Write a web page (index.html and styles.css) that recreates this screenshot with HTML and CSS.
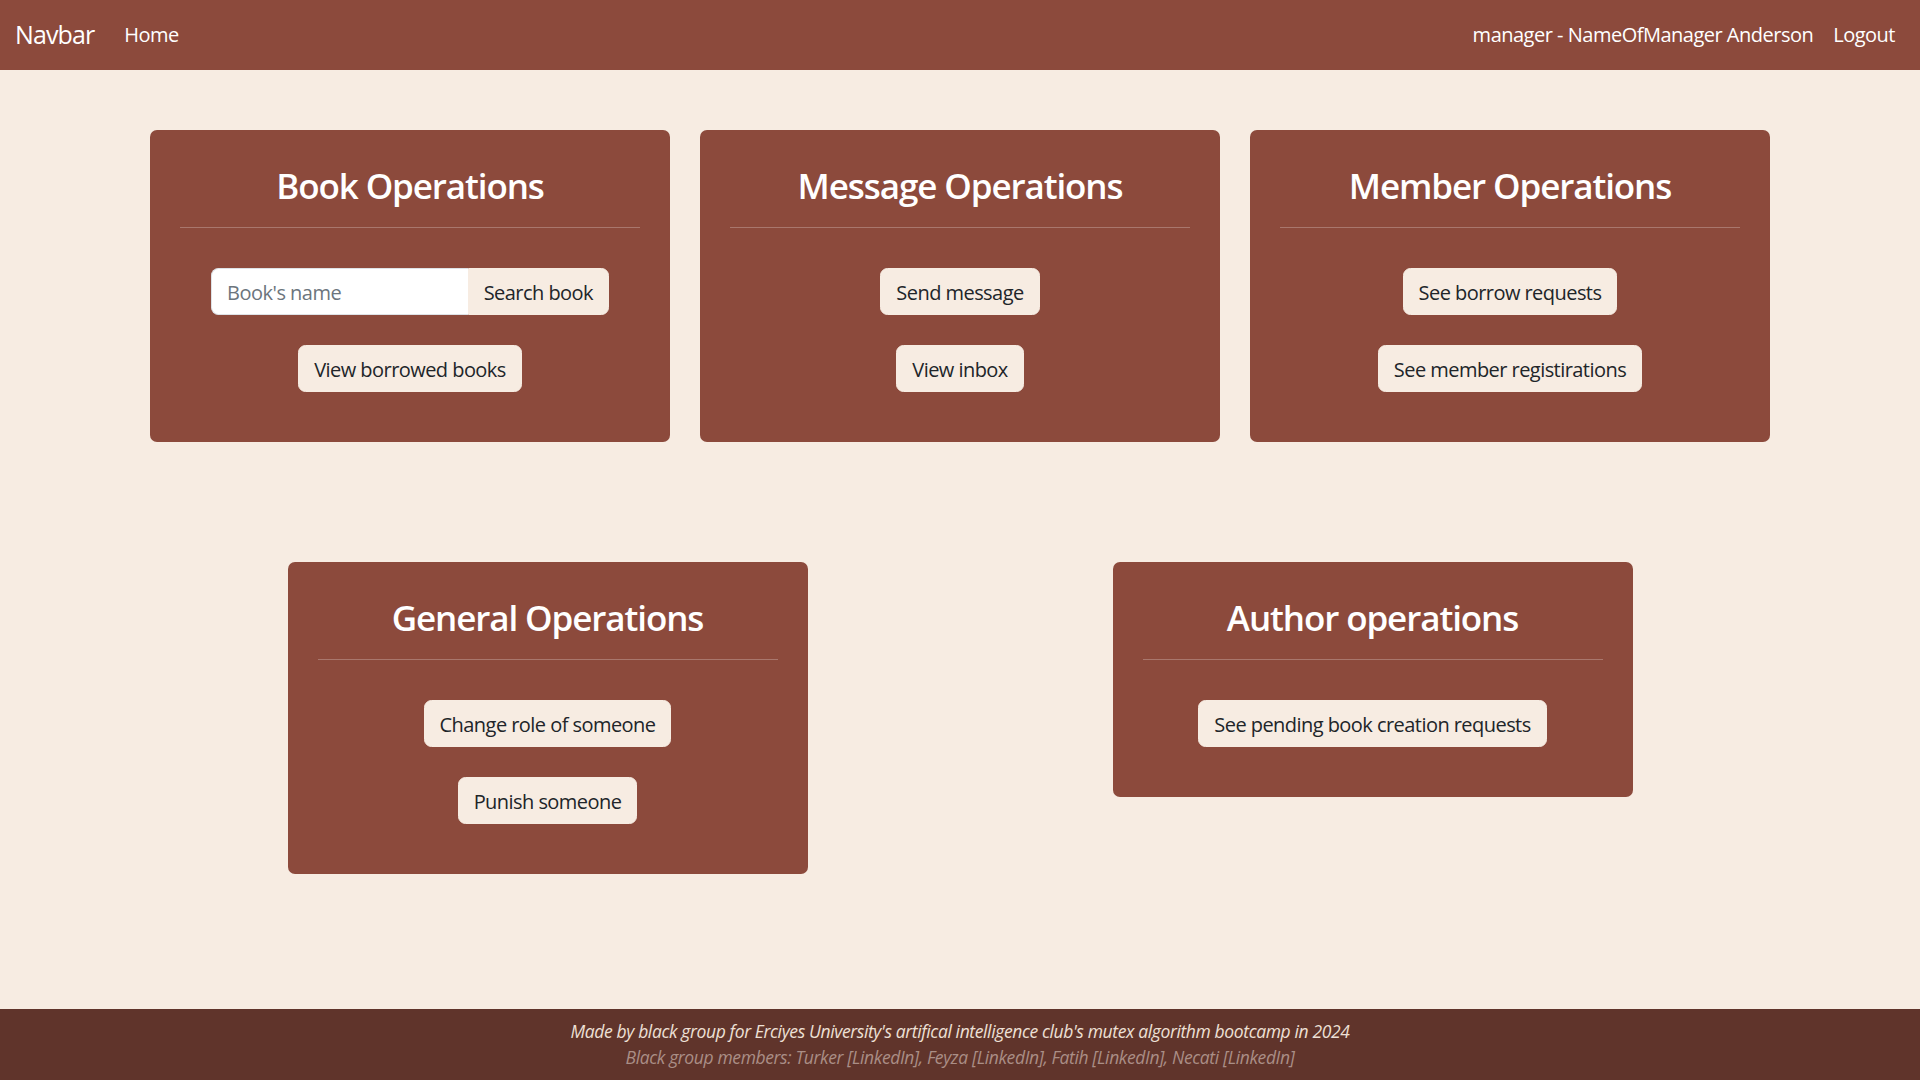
FILE: index.html
```html
<!DOCTYPE html>
<html lang="en">
<head>
<meta charset="utf-8">
<title>Manager Panel</title>
<link rel="stylesheet" href="styles.css">
</head>
<body>
<nav class="navbar">
  <div class="nav-left">
    <a class="brand" href="#">Navbar</a>
    <a class="nav-link" href="#">Home</a>
  </div>
  <div class="nav-right">
    <span class="nav-link">manager - NameOfManager Anderson</span>
    <a class="nav-link" href="#">Logout</a>
  </div>
</nav>

<main class="page">
  <div class="container">
    <div class="row row-three">
      <section class="card">
        <h3 class="card-title">Book Operations</h3>
        <hr class="divider">
        <div class="actions">
          <div class="input-group">
            <input class="search-input" type="text" placeholder="Book's name">
            <button class="btn btn-attached">Search book</button>
          </div>
          <button class="btn">View borrowed books</button>
        </div>
      </section>
      <section class="card">
        <h3 class="card-title">Message Operations</h3>
        <hr class="divider">
        <div class="actions">
          <button class="btn">Send message</button>
          <button class="btn">View inbox</button>
        </div>
      </section>
      <section class="card">
        <h3 class="card-title">Member Operations</h3>
        <hr class="divider">
        <div class="actions">
          <button class="btn">See borrow requests</button>
          <button class="btn">See member registirations</button>
        </div>
      </section>
    </div>
    <div class="row row-two">
      <section class="card">
        <h3 class="card-title">General Operations</h3>
        <hr class="divider">
        <div class="actions">
          <button class="btn">Change role of someone</button>
          <button class="btn">Punish someone</button>
        </div>
      </section>
      <section class="card">
        <h3 class="card-title">Author operations</h3>
        <hr class="divider">
        <div class="actions">
          <button class="btn">See pending book creation requests</button>
        </div>
      </section>
    </div>
  </div>
</main>

<footer class="footer">
  <p class="footer-line">Made by black group for Erciyes University's artifical intelligence club's mutex algorithm bootcamp in 2024</p>
  <p class="footer-line footer-muted">Black group members: Turker [LinkedIn], Feyza [LinkedIn], Fatih [LinkedIn], Necati [LinkedIn]</p>
</footer>
</body>
</html>
```

FILE: styles.css
```css
* {
  box-sizing: border-box;
}

html, body {
  margin: 0;
  padding: 0;
}

body {
  min-height: 100vh;
  display: flex;
  flex-direction: column;
  background: #f7ece2;
  color: #212529;
  font-family: "Open Sans", "Noto Sans", sans-serif;
  font-size: 20px;
  line-height: 1.5;
}

/* Navbar */
.navbar {
  height: 70px;
  background: #8c4a3c;
  display: flex;
  align-items: center;
  justify-content: space-between;
  padding: 0 15px;
}

.nav-left,
.nav-right {
  display: flex;
  align-items: center;
}

.brand {
  color: #ffffff;
  text-decoration: none;
  font-size: 25px;
  line-height: 37.5px;
  letter-spacing: -0.9px;
  margin-right: 20px;
}

.nav-link {
  color: #ffffff;
  text-decoration: none;
  font-size: 20px;
  line-height: 30px;
  padding: 0 10px;
  letter-spacing: -0.5px;
}

/* Main */
.container {
  width: 1650px;
  margin: 60px auto 0;
  display: flex;
  flex-direction: column;
  gap: 120px;
}

.row {
  display: grid;
  align-items: start;
  justify-items: center;
}

.row-three {
  grid-template-columns: repeat(3, 1fr);
}

.row-two {
  grid-template-columns: repeat(2, 1fr);
}

.card {
  width: 520px;
  background: #8c4a3c;
  border-radius: 7px;
  padding: 35px 30px 50px;
  color: #ffffff;
  text-align: center;
}

.card-title {
  margin: 0;
  font-size: 35px;
  line-height: 42px;
  font-weight: 600;
  letter-spacing: -1.1px;
}

.divider {
  margin: 20px 0 0;
  border: 0;
  border-top: 1px solid rgba(255, 255, 255, 0.25);
  height: 0;
}

.actions {
  margin-top: 40px;
  display: flex;
  flex-direction: column;
  align-items: center;
  gap: 30px;
}

.btn {
  font-family: inherit;
  font-size: 20px;
  line-height: 30px;
  letter-spacing: -0.55px;
  color: #212529;
  background: #f7ece2;
  border: 1px solid #f7ece2;
  border-radius: 7.5px;
  padding: 9px 15px 6px;
  cursor: pointer;
}

.input-group {
  display: flex;
  width: 398px;
}

.search-input {
  flex: 1;
  min-width: 0;
  font-family: inherit;
  font-size: 20px;
  line-height: 30px;
  letter-spacing: -0.5px;
  color: #212529;
  background: #ffffff;
  border: 1px solid #dee2e6;
  border-right: 0;
  border-radius: 7.5px 0 0 7.5px;
  padding: 9px 15px 6px;
  outline: none;
}

.search-input::placeholder {
  color: #6c757d;
}

.btn-attached {
  border-radius: 0 7.5px 7.5px 0;
}

/* Footer */
.footer {
  margin-top: auto;
  background: #60342b;
  padding: 9px 0 9.5px;
  text-align: center;
}

.footer-line {
  margin: 0;
  font-size: 17.5px;
  line-height: 26.25px;
  font-style: italic;
  color: #eee0d6;
  letter-spacing: -0.38px;
}

.footer-muted {
  color: #aa8e86;
}
```
